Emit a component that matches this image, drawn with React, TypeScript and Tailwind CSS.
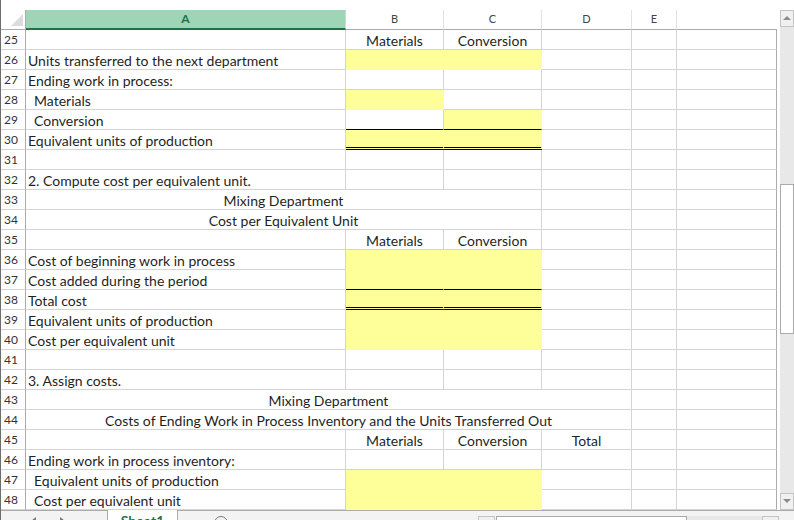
import React from "react";
import clsx from "clsx";

type Cell = {
	t?: string;
	w?: string;
	center?: boolean;
	indent?: boolean;
	yellow?: boolean;
	bottom?: "single" | "double";
};

type Row = { n: number; cells: Cell[] };

const COLS = [
	"w-[320px]",
	"w-[98px]",
	"w-[98px]",
	"w-[90px]",
	"w-[45px]",
	"w-[100px]",
];

// fill a row up to six columns, merged cells carry their own width
const fill = (cells: Cell[]): Cell[] => {
	const out: Cell[] = [];
	let col = 0;
	for (const c of cells) {
		out.push({ ...c, w: c.w ?? COLS[col] });
		col += c.w === "w-[516px]" ? 3 : c.w === "w-[606px]" ? 4 : 1;
	}
	while (col < 6) {
		out.push({ w: COLS[col] });
		col++;
	}
	return out;
};

const Y: Cell = { yellow: true };

const rows: Row[] = [
	{ n: 25, cells: [{}, { t: "Materials", center: true }, { t: "Conversion", center: true }] },
	{ n: 26, cells: [{ t: "Units transferred to the next department" }, Y, Y] },
	{ n: 27, cells: [{ t: "Ending work in process:" }] },
	{ n: 28, cells: [{ t: "Materials", indent: true }, Y] },
	{ n: 29, cells: [{ t: "Conversion", indent: true }, { bottom: "single" }, { yellow: true, bottom: "single" }] },
	{ n: 30, cells: [{ t: "Equivalent units of production" }, { yellow: true, bottom: "double" }, { yellow: true, bottom: "double" }] },
	{ n: 31, cells: [] },
	{ n: 32, cells: [{ t: "2. Compute cost per equivalent unit." }] },
	{ n: 33, cells: [{ t: "Mixing Department", center: true, w: "w-[516px]" }] },
	{ n: 34, cells: [{ t: "Cost per Equivalent Unit", center: true, w: "w-[516px]" }] },
	{ n: 35, cells: [{}, { t: "Materials", center: true }, { t: "Conversion", center: true }] },
	{ n: 36, cells: [{ t: "Cost of beginning work in process" }, Y, Y] },
	{ n: 37, cells: [{ t: "Cost added during the period" }, { yellow: true, bottom: "single" }, { yellow: true, bottom: "single" }] },
	{ n: 38, cells: [{ t: "Total cost" }, { yellow: true, bottom: "double" }, { yellow: true, bottom: "double" }] },
	{ n: 39, cells: [{ t: "Equivalent units of production" }, Y, Y] },
	{ n: 40, cells: [{ t: "Cost per equivalent unit" }, Y, Y] },
	{ n: 41, cells: [] },
	{ n: 42, cells: [{ t: "3. Assign costs." }] },
	{ n: 43, cells: [{ t: "Mixing Department", center: true, w: "w-[606px]" }] },
	{ n: 44, cells: [{ t: "Costs of Ending Work in Process Inventory and the Units Transferred Out", center: true, w: "w-[606px]" }] },
	{ n: 45, cells: [{}, { t: "Materials", center: true }, { t: "Conversion", center: true }, { t: "Total", center: true }] },
	{ n: 46, cells: [{ t: "Ending work in process inventory:" }] },
	{ n: 47, cells: [{ t: "Equivalent units of production", indent: true }, Y, Y] },
	{ n: 48, cells: [{ t: "Cost per equivalent unit", indent: true }, Y, Y] },
];

const Arrow = ({ down }: { down?: boolean }) => (
	<svg width="8" height="5" viewBox="0 0 8 5">
		<polygon
			points={down ? "0,0 8,0 4,4" : "0,4 8,4 4,0"}
			fill="#8a8a8a"
		/>
	</svg>
);

const SheetCell = ({ c, last }: { c: Cell; last: boolean }) => (
	<div
		className={clsx(
			"flex h-full shrink-0 items-end whitespace-nowrap border-r border-b leading-[17px]",
			c.w,
			c.yellow
				? "border-[#ffff99] bg-[#ffff99]"
				: "border-[#d4d4d4]",
			c.bottom === "single" && "border-b-black",
			c.bottom === "double" && "border-b-[3px] border-double border-b-black",
			c.center ? "justify-center" : c.indent ? "pl-[8px]" : "pl-[2px]",
			last && "border-r-[#ababab]",
		)}
	>
		{c.t}
	</div>
);

export default function App() {
	return (
		<div
			className="relative flex h-[520px] w-[794px] flex-col overflow-hidden border-l border-[#6d6d6d] bg-white text-[14px] text-[#1f1f1f]"
			style={{ fontFamily: 'Lato, "Liberation Sans", sans-serif' }}
		>
			<div className="h-[10px] shrink-0" />

			<div className="flex h-[500px] shrink-0">
				{/* sheet grid */}
				<div className="flex w-[776px] flex-col">
					{/* column headers */}
					<div className="flex h-[20px] shrink-0 text-[11px] text-[#444]">
						<div className="w-[25px] shrink-0 border-r border-b border-[#ababab]">
							<svg width="24" height="19" viewBox="0 0 24 19">
								<polygon points="10,16 22,16 22,4" fill="#dcdcdc" />
							</svg>
						</div>
						<div className="flex w-[320px] shrink-0 items-center justify-center border-r border-b-2 border-r-[#d4d4d4] border-b-[#217346] bg-[#9fd5b7] text-[12px] font-bold text-[#217346]">
							A
						</div>
						{["B", "C", "D", "E"].map((l, i) => (
							<div
								key={l}
								className={clsx(
									"flex shrink-0 items-center justify-center border-r border-b border-r-[#e1e1e1] border-b-[#ababab]",
									COLS[i + 1],
								)}
							>
								{l}
							</div>
						))}
						<div className="w-[100px] shrink-0 border-b border-[#ababab]" />
					</div>

					{rows.map((r) => {
						const cells = fill(r.cells);
						return (
							<div key={r.n} className="flex h-[20px] shrink-0">
								<div className="flex w-[25px] shrink-0 items-center border-r border-b border-r-[#ababab] border-b-[#d4d4d4] pl-[3px] text-[12px] text-[#333]">
									{r.n}
								</div>
								{cells.map((c, i) => (
									<SheetCell key={i} c={c} last={i === cells.length - 1} />
								))}
							</div>
						);
					})}
				</div>

				{/* vertical scrollbar */}
				<div className="ml-[3px] flex w-[15px] flex-col bg-[#e8e8e8]">
					<div className="flex h-[17px] shrink-0 items-center justify-center border border-[#c4c4c4] bg-[#f0f0f0]">
						<Arrow />
					</div>
					<div className="mt-[157px] h-[150px] shrink-0 border border-[#ababab] bg-white" />
					<div className="flex-1" />
					<div className="flex h-[17px] shrink-0 items-center justify-center border border-[#c4c4c4] bg-[#f0f0f0]">
						<Arrow down />
					</div>
				</div>
			</div>

			{/* sheet tabs bar */}
			<div className="flex h-[30px] shrink-0 items-start border-t border-[#ababab] bg-[#f3f3f3]">
				<div className="flex w-[106px] shrink-0 pt-[6px]">
					<svg className="ml-[29px]" width="8" height="8" viewBox="0 0 8 8">
						<polygon points="6,0 6,8 1,4" fill="#7a7a7a" />
					</svg>
					<svg className="ml-[20px]" width="8" height="8" viewBox="0 0 8 8">
						<polygon points="2,0 2,8 7,4" fill="#7a7a7a" />
					</svg>
				</div>
				<div className="-mt-px flex h-[30px] w-[71px] shrink-0 justify-center border-x border-[#ababab] bg-white pt-0 text-[14px] font-bold text-[#217346]">
					Sheet1
				</div>
				<div className="ml-[36px] mt-[5px] flex h-[14px] w-[14px] shrink-0 items-center justify-center rounded-full border border-[#7a7a7a] text-[11px] leading-none text-[#7a7a7a]">
					+
				</div>
				<div className="ml-[250px] mt-[5px] flex h-[18px] shrink-0">
					<div className="w-[17px] border border-[#c4c4c4] bg-[#f0f0f0]" />
					<div className="ml-[1px] w-[191px] border border-[#ababab] bg-white" />
					<div className="w-[75px] bg-[#e8e8e8]" />
					<div className="w-[17px] border border-[#c4c4c4] bg-[#f0f0f0]" />
				</div>
			</div>
		</div>
	);
}
